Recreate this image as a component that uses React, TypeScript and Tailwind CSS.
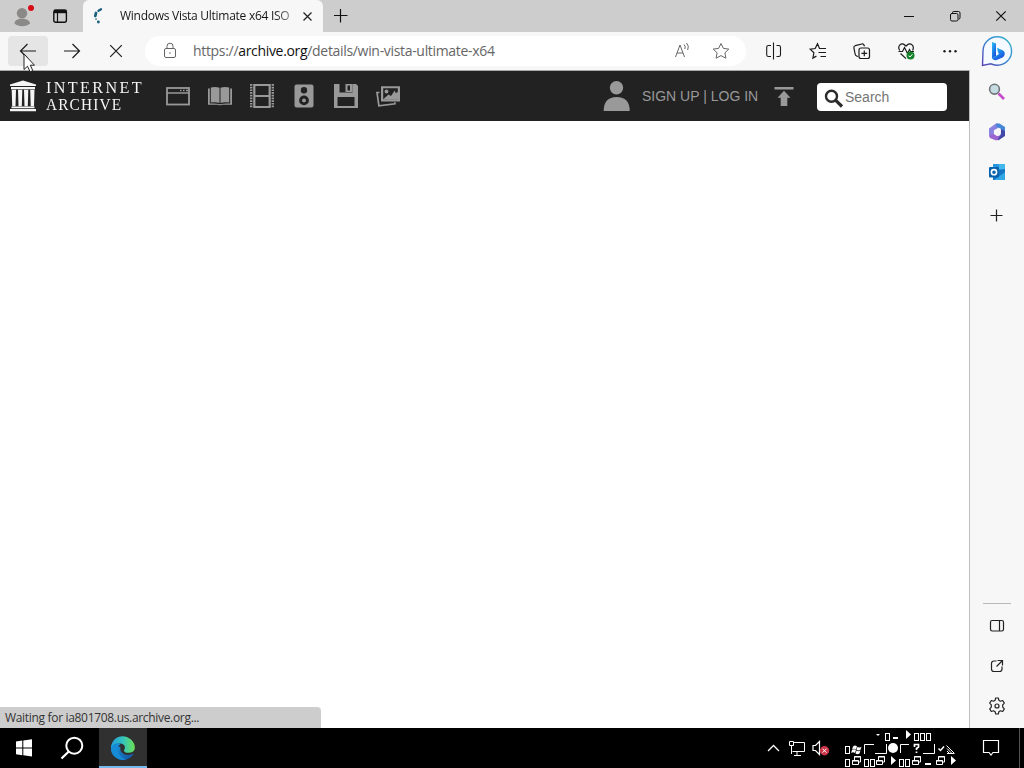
import type { ReactNode } from 'react';

const UI_FONT = "font-['Open_Sans','Noto_Sans',sans-serif]";

function Icon({
  w = 24,
  h = 24,
  className = '',
  children,
}: {
  w?: number;
  h?: number;
  className?: string;
  children: ReactNode;
}) {
  return (
    <svg
      width={w}
      height={h}
      viewBox={`0 0 ${w} ${h}`}
      fill="none"
      stroke="currentColor"
      className={`shrink-0 ${className}`}
    >
      {children}
    </svg>
  );
}

function TabStrip() {
  return (
    <div className="flex h-8 shrink-0 bg-[#cdcdcd]">
      <div className="flex w-[83px] items-center pl-3">
        <Icon w={24} h={32}>
          <circle cx="10" cy="13.3" r="5.2" fill="#8b8987" stroke="none" />
          <path d="M2.500 23.500c0-3 3-4.700 7.500-4.700s8 1.700 8 4.700c-4 3.700-11.500 3.700-15.500 0z" fill="#8b8987" stroke="none" />
          <circle cx="19" cy="8" r="3" fill="#d90d17" stroke="none" />
        </Icon>
        <Icon w={24} h={32} className="ml-3">
          <rect x="5.800" y="10.200" width="12.600" height="12" rx="2" strokeWidth="1.400" />
          <path d="M6 9.600h12.500v3.600H6z" fill="currentColor" stroke="none" />
          <path d="M9.500 13v9" strokeWidth="1.200" />
        </Icon>
      </div>
      <div className="flex w-60 items-center rounded-t-md bg-[#f7f7f7]">
        <Icon w={18} h={18} className="ml-1.5 text-[#1d617f]">
          <path d="M9.500 3.800l2.500-1.500" strokeWidth="2.300" strokeLinecap="round" />
          <path d="M7 6l-.7 3" strokeWidth="2.800" strokeLinecap="round" />
          <path d="M9.300 15h.1" strokeWidth="2.800" strokeLinecap="round" />
          <path d="M6.800 11.500l.5 1.300" strokeWidth="1.500" />
        </Icon>
        <span
          className={`ml-[13px] w-[171px] overflow-hidden whitespace-nowrap bg-gradient-to-r from-[#151515] from-90% to-[#8d8d8d] bg-clip-text text-[12px] leading-4 tracking-[-0.27px] text-transparent ${UI_FONT}`}
        >
          Windows Vista Ultimate x64 ISO
        </span>
        <Icon w={16} h={16} className="ml-2 text-[#222]">
          <path d="M4.500 4.500l8 8m0-8l-8 8" strokeWidth="1.200" />
        </Icon>
      </div>
      <Icon w={34} h={32}>
        <path d="M11 15.500h13.500M17.500 9v13.500" strokeWidth="1.200" />
      </Icon>
      <div className="ml-auto flex">
        <Icon w={46} h={32}>
          <path d="M18 16.500h10" />
        </Icon>
        <Icon w={46} h={32}>
          <rect x="18.500" y="13.500" width="7.500" height="7.500" rx="1.500" />
          <path d="M20.500 13.500v-.700q0-1.300 1.300-1.300h4.700q1.500 0 1.500 1.500v4.700q0 1.500-1.500 1.500" />
        </Icon>
        <Icon w={46} h={32}>
          <path d="M18.300 11.300l9.400 9.400m0-9.400l-9.400 9.400" strokeWidth="1.200" />
        </Icon>
      </div>
    </div>
  );
}

function BingLogo() {
  return (
    <Icon w={32} h={32}>
      <defs>
        <linearGradient id="bingRing" x1="0" y1="1" x2="1" y2="0">
          <stop offset="0" stopColor="#5b3fb3" />
          <stop offset="0.500" stopColor="#3787d2" />
          <stop offset="1" stopColor="#35b6c8" />
        </linearGradient>
        <linearGradient id="bingB" x1="0" y1="0" x2="0.700" y2="1">
          <stop offset="0" stopColor="#2dc4f2" />
          <stop offset="0.600" stopColor="#1c7de8" />
          <stop offset="1" stopColor="#1b4ad8" />
        </linearGradient>
      </defs>
      <path d="M1.500 30.500L2 16a14.300 14.300 0 1 1 14.300 14.300c-2.500 0-4.500-.8-6.500-1.500z" fill="#f4faff" stroke="url(#bingRing)" strokeWidth="1.400" />
      <path d="M11 7l4 1.500v12.500l-4 2.500z" fill="url(#bingB)" stroke="none" />
      <path d="M16 12.800l5.500 2.500q3 1.500 2 4.700-.5 1.500-2 2.500L15.700 25q-2.500 1-4.700-1.500l7-4.500-1-1.800z" fill="url(#bingB)" stroke="none" />
    </Icon>
  );
}

function Toolbar() {
  return (
    <div className="flex h-[38px] shrink-0 items-center bg-[#f7f7f7] text-[#1b1b1b]">
      <div className="relative ml-2 flex h-[30px] w-10 items-center justify-center rounded bg-[#e5e5e5]">
        <Icon>
          <path d="M20 12H4.500m7-7l-7 7 7 7" strokeWidth="1.200" />
        </Icon>
        <svg width="12" height="20" viewBox="0 0 12 20" className="absolute top-[17px] left-[15px]">
          <path d="M1 1v15.500l3.500-3.300 2.600 5.600 2.700-1.200-2.500-5.400h4.200z" fill="#fff" stroke="#222" strokeWidth="1" />
        </svg>
      </div>
      <Icon w={40} className="ml-1">
        <path d="M12 12h15.500m-7-7l7 7-7 7" strokeWidth="1.200" />
      </Icon>
      <Icon w={40} className="ml-1">
        <path d="M14.200 6.200l11.600 11.600m0-11.600L14.200 17.800" strokeWidth="1.200" />
      </Icon>
      <div className="ml-[9px] flex h-[30px] w-[601px] items-center rounded-full bg-white text-[#666]">
        <Icon w={16} h={20} className="ml-[17px]">
          <rect x="2.500" y="7.500" width="11" height="9" rx="1.500" />
          <path d="M5 7.500V5.200a3 3 0 0 1 6 0v2.300" />
          <circle cx="8" cy="12" r=".8" fill="currentColor" stroke="none" />
        </Icon>
        <span className={`ml-[15px] whitespace-nowrap text-[14px] leading-5 tracking-[-0.32px] ${UI_FONT}`}>
          https://<span className="text-[#111]">archive.org</span>/details/win-vista-ultimate-x64
        </span>
        <div className="ml-auto flex pr-[13px]">
          <Icon w={40}>
            <path d="M6.500 18l4.500-12 4.500 12m-7.500-4h6M15 5.500q2 2 .8 4.500M17.500 4q3 3 1.200 7" strokeWidth="1" />
          </Icon>
          <Icon>
            <path d="M12 4.500l2.400 4.900 5.400.7-3.900 3.700 1 5.400-4.900-2.600-4.900 2.600 1-5.400-3.900-3.700 5.400-.7z" strokeLinejoin="round" />
          </Icon>
        </div>
      </div>
      <div className="ml-1.5 flex">
        <Icon w={44}>
          <path d="M19 6.500h-2.500q-1.800 0-1.800 1.800v7.400q0 1.800 1.800 1.800H19M21.500 3.500v17M24.500 6.500h2.200q1.800 0 1.800 1.800v7.400q0 1.800-1.800 1.800h-2.200" strokeWidth="1.100" />
        </Icon>
        <Icon w={44}>
          <path d="M24 9.500h-.5l-2-4.800-2.300 4.800-5 .700 3.700 3.600-1 5.200 3.500-1.900M23.500 9.500h6.500M22.500 13.500h7.500M24.500 17.500h5.500" strokeWidth="1.200" />
        </Icon>
        <Icon w={44}>
          <path d="M18 17.500l-1-.3q-1.600-.5-1.900-2.200l-1.200-6.200q-.3-1.600 1.300-2.100l6.700-1.700q1.500-.4 2.200 1.200l.4 1" strokeWidth="1.200" />
          <rect x="19" y="9" width="10.500" height="10.500" rx="2" strokeWidth="1.200" />
          <path d="M24.300 11.500v5.700m-2.900-2.800h5.800" strokeWidth="1.200" />
        </Icon>
        <Icon w={44}>
          <path d="M15.700 11.500q-2-3.300.2-5.600 2.800-2.600 6.100 1.200 3.300-3.800 6.100-1.200 2.200 2.200.5 5.600M16.500 14.500l5.500 5.100M14.500 12.500h4l2-4 3 6 2-4 1 2h3.500" strokeWidth="1.200" />
          <circle cx="26.500" cy="16.500" r="4" fill="#16822b" stroke="none" />
          <path d="M24.600 16.700l1.300 1.300 2.500-2.700" stroke="#fff" />
        </Icon>
        <Icon w={44}>
          <g fill="currentColor" stroke="none">
            <circle cx="16.500" cy="12.200" r="1.200" />
            <circle cx="22" cy="12.200" r="1.200" />
            <circle cx="27.500" cy="12.200" r="1.200" />
          </g>
        </Icon>
      </div>
      <div className="ml-auto w-[43px]">
        <BingLogo />
      </div>
    </div>
  );
}

function ArchiveHeader() {
  return (
    <header className="flex h-[50px] shrink-0 items-center bg-[#222] text-[#999]">
      <Icon w={28} h={32} className="ml-[9px] text-[#f5f5f5]">
        <g fill="currentColor" stroke="none">
          <path d="M14 .500L27 4.500V6H1V4.500zM2 7h24v2.200H2zM1 29h26v2.200H1zM2.500 26.500h23v1.700h-23z" />
          <path d="M2.700 9.800h4.300l-.5 16.500H3.200zM9 9.800h4.300l-.5 16.500H9.500zM15 9.800h4.300l-.5 16.500h-3.300zM21.200 9.800h4.300l-.5 16.500h-3.300z" />
        </g>
      </Icon>
      <div className="ml-[9px] w-[106px] font-['Liberation_Serif',serif] text-[17px] leading-[17.500px] whitespace-nowrap text-[#f5f5f5]">
        <div className="origin-left scale-x-95 tracking-[2.500px]">INTERNET</div>
        <div className="origin-left scale-x-90 tracking-[1.300px]">ARCHIVE</div>
      </div>
      <nav className="ml-[14px] flex gap-[18px]">
        <Icon>
          <rect x="1" y="4" width="22" height="16.500" strokeWidth="1.800" />
          <path d="M1 9h22" strokeWidth="1.500" />
          <path d="M14 6.500h1.500m1.500 0h1.500m1.500 0H22" strokeWidth="1.500" />
        </Icon>
        <Icon>
          <g fill="currentColor" stroke="none">
            <path d="M2.800 3.500q5-1 8.700.3v15.200q-3.700-1.200-8.700-.5zM12.500 3.800q3.700-1.300 8.700-.3v15q-5-.7-8.700.5z" />
            <path d="M0 4.500h1.800v15.100q6-.5 10.200.6 4.200-1.100 10.200-.6V4.500H24v16.300H14q-2 1-4 0H0z" />
          </g>
        </Icon>
        <Icon w={24} h={26} className="-my-px">
          <path d="M1.200 1v24M22.800 1v24" strokeWidth="2.400" strokeDasharray="1.700 1" />
          <path d="M4.300 1v24M19.700 1v24" strokeWidth="2.200" />
          <path d="M4 2h16M4 13h16M4 24h16" strokeWidth="2.200" />
        </Icon>
        <Icon>
          <path fillRule="evenodd" d="M4.500.500h15q2 0 2 2v19q0 2-2 2h-15q-2 0-2-2v-19q0-2 2-2zM12 3a3.200 3.200 0 1 0 0 6.400A3.200 3.200 0 0 0 12 3zM12 11.500a4.900 4.900 0 1 0 0 9.800 4.900 4.900 0 0 0 0-9.800z" fill="currentColor" stroke="none" />
          <circle cx="12" cy="16.400" r="1.900" fill="currentColor" stroke="none" />
        </Icon>
        <Icon>
          <path fillRule="evenodd" d="M0 0h22l2 2v22H0zM5.500 0v8.500h13V0zM3.500 13v9h17v-9z" fill="currentColor" stroke="none" />
          <path d="M11.500 0h7v8h-7zM13.500 1.500v5h2.500v-5z" fillRule="evenodd" fill="currentColor" stroke="none" />
        </Icon>
        <Icon>
          <path d="M3.500 8.500H1l1.900 13.300 16-2v-1.500" strokeWidth="1.700" />
          <path fillRule="evenodd" d="M5 2.200h19v15.300H5zM7.200 4.300v11h14.600v-11z" fill="currentColor" stroke="none" />
          <circle cx="10.500" cy="7.500" r="1.900" fill="currentColor" stroke="none" />
          <path d="M7 15.500l5.500-5 2.500 1.500L18.700 6.500l1.200 3L21 8l1.500 1v6.500z" fill="currentColor" stroke="none" />
        </Icon>
      </nav>
      <Icon w={28} h={32} className="ml-auto">
        <circle cx="14.500" cy="7.700" r="6.700" fill="currentColor" stroke="none" />
        <path d="M1.700 31q0-14 13-14t13 14z" fill="currentColor" stroke="none" />
      </Icon>
      <span className="ml-[12px] w-[118px] font-['Liberation_Sans',sans-serif] text-[14px] leading-5 whitespace-nowrap">
        SIGN UP | LOG IN
      </span>
      <Icon w={24} className="ml-[12px]">
        <path d="M2.500 3h19v2.500h-19zM12 6.800l6.500 7H15.300V22H8.700v-8.200H5.500z" fill="currentColor" stroke="none" />
      </Icon>
      <div className="mt-0.5 mr-[22px] ml-[21px] flex h-7 w-[130px] items-center rounded bg-white">
        <Icon w={20} h={22} className="ml-[7px] text-[#2b2b2b]">
          <circle cx="7.500" cy="10.200" r="5.500" strokeWidth="2.400" />
          <path d="M11.500 14.200l6.500 6.300" strokeWidth="3.200" />
        </Icon>
        <span className="ml-px font-['Liberation_Sans',sans-serif] text-[14px] text-[#757575]">Search</span>
      </div>
    </header>
  );
}

function Sidebar() {
  return (
    <aside className="flex w-[55px] shrink-0 flex-col items-center border-l border-[#bdbdbd] bg-[#f7f7f7] pt-[10px] text-[#222]">
      <Icon>
        <path d="M13.500 13.500l5.500 5.500" stroke="#c44bc9" strokeWidth="2.700" />
        <circle cx="9.500" cy="9.200" r="4.900" fill="#c5dce3" stroke="#707478" strokeWidth="1.600" />
      </Icon>
      <Icon className="mt-4">
        <path d="M11 3.500l3 .5-1.500 4.500L9 11v5l-4 1.500-1-3V8.500z" fill="#8a83e0" stroke="none" />
        <path d="M11 3.500h3.500L20 7v5.500l-3.500-1.500-1-2.500-4-1.500z" fill="#4486d8" stroke="none" />
        <path d="M16 9l4 2v5l-6.500 4.300-3.500-1 5.500-4.300z" fill="#4348a8" stroke="none" />
        <path d="M4 15.500l5-1.500 3 2 3-.5-2.500 4.800h-2L5 18z" fill="#9c65d0" stroke="none" />
        <path d="M12.200 8.500l3.500 1.800v3.500l-3.500 2.200-3.300-2.200v-3.500z" fill="#f7f7f7" stroke="none" />
      </Icon>
      <Icon className="mt-4">
        <path d="M8 4h12v7H8z" fill="#2695dd" stroke="none" />
        <path d="M14 4h6v5h-6z" fill="#43b8ec" stroke="none" />
        <path d="M8 11l12-1.500V20H8z" fill="#1475c3" stroke="none" />
        <path d="M9 20l11-8v8z" fill="#32a7e6" stroke="none" />
        <rect x="4" y="7" width="10" height="10.500" rx="1" fill="#0863ad" stroke="none" />
        <circle cx="9" cy="12.200" r="2.600" stroke="#fff" strokeWidth="1.600" />
      </Icon>
      <Icon className="mt-5">
        <path d="M5.500 11.500h12M11.500 5.500v12" strokeWidth="1.200" />
      </Icon>
      <div className="mt-auto mb-2.5 h-px w-7 bg-[#b8b8b8]" />
      <Icon>
        <rect x="5.500" y="6.500" width="13" height="10.500" rx="1.700" strokeWidth="1.200" />
        <path d="M14.500 6.500V17" strokeWidth="1.200" />
      </Icon>
      <Icon className="mt-4">
        <path d="M11.500 7H9Q6.500 7 6.500 9.500V15q0 2.500 2.500 2.500h5.500q2.500 0 2.500-2.500v-2.500M12.500 6.500h5v5m0-5l-6 6" strokeWidth="1.200" />
      </Icon>
      <Icon className="mt-4 mb-[10px]">
        <path d="M10.700 4h2.600l.6 2.300 1.500.9 2.300-.7 1.600 2.600-1.600 1.800v2.200l1.600 1.800-1.600 2.600-2.300-.7-1.500.9-.6 2.300h-2.600l-.6-2.300-1.500-.9-2.300.7-1.600-2.600 1.600-1.800v-2.200L4.700 9.100l1.600-2.600 2.300.7 1.500-.9z" strokeWidth="1.200" strokeLinejoin="round" />
        <circle cx="12" cy="12" r="2" strokeWidth="1.200" />
      </Icon>
    </aside>
  );
}

const hollowBoxes = [
  [45, 5], [74, 5], [80, 5], [86, 5],
  [5, 18],
  [5, 31], [24, 31], [30, 31], [59, 31], [65, 31],
];

const restoreGlyphs = [12, 36, 72, 96];

const arrows = [
  [66, 2], [51, 28], [111, 28],
];

// Symbol-font glyphs shown by the language bar
function TrayGlyphs() {
  return (
    <Icon w={120} h={40}>
      {hollowBoxes.map(([x, y]) => (
        <rect key={`${x}-${y}`} x={x + 0.5} y={y + 0.5} width="4" height="7" />
      ))}
      {restoreGlyphs.map((x) => (
        <path key={x} d={`M${x + 0.5} 32.500h6v4h-6zM${x + 2.5} 32v-3.500h6v5.500h-2M${x + 2} 29h7M${x} 33h7`} />
      ))}
      {arrows.map(([x, y]) => (
        <path key={`${x}-${y}`} d={`M${x} ${y}l5 4.500-5 4.500z`} fill="currentColor" stroke="none" />
      ))}
      <path d="M36 6h4l-2 2zM53 9h5v2h-5zM85 35h6v2h-6z" fill="currentColor" stroke="none" />
      <path d="M24.500 26v-9.500H34M35 25.500h11.500V16M60.500 25v-8.500H69M83 25.500h11.500V16" />
      <circle cx="53" cy="20" r="5" fill="currentColor" stroke="none" />
      <path d="M74.500 19v-2.500h4V19l-2 1.500V22m0 1.500V25" strokeWidth="1.700" />
      <path d="M98.500 20.500l2 2 3.500-4" strokeWidth="1.500" />
      <path d="M106.500 17.500l8 8M107 20.500l5 5M107 23l3 3M107 25.500h7" />
      <path d="M13 18.500q2-2 4 0l-1 3q-2-1.500-4 0zM17.500 18.800q2 1.500 4 0l-1 3q-2 1.500-4 0zM12 22q2-1.500 4 0l-1 3q-2-1.500-4 0zM16.500 22.500q2 1.500 4 0l-1 3q-2 1.500-4 0z" fill="currentColor" stroke="none" />
    </Icon>
  );
}

function Taskbar() {
  return (
    <footer className="flex h-10 shrink-0 bg-black text-white">
      <Icon w={48} h={40}>
        <path d="M16 13.600l6.300-1v6.900H16zM23.300 12.400l8.700-1.200v8.300h-8.700zM16 20.500h6.300v6.700l-6.300-1zM23.300 20.500H32v8l-8.700-1.200z" fill="currentColor" stroke="none" />
      </Icon>
      <Icon w={51} h={40}>
        <circle cx="26.300" cy="17.700" r="8" strokeWidth="2" />
        <path d="M20.800 23.500l-7.300 7" strokeWidth="2.300" />
      </Icon>
      <div className="flex w-12 justify-center border-b-2 border-[#76b9ed] bg-[#303030]">
        <Icon w={48} h={38}>
          <defs>
            <linearGradient id="edgeTop" x1="0" y1="0.500" x2="1" y2="0.500">
              <stop offset="0" stopColor="#239cdb" />
              <stop offset="0.500" stopColor="#35c4bd" />
              <stop offset="1" stopColor="#6be053" />
            </linearGradient>
            <linearGradient id="edgeBody" x1="0" y1="0" x2="1" y2="1">
              <stop offset="0" stopColor="#1b9ade" />
              <stop offset="1" stopColor="#1250a0" />
            </linearGradient>
          </defs>
          <path d="M12 20a12 12 0 0 0 20 9q3-2.500 2-3.500-5 3-10 0-3.500-2.500-2.500-6.500L12 17z" fill="url(#edgeBody)" stroke="none" />
          <path d="M12 20C12.500 8 25 5 32 11.500q4.500 4.500 3.800 9.300-1 4-6.300 4-4.500 0-4.500-2.300 0-1 .8-2 .8-4-3.800-5-7-.5-10 4.500z" fill="url(#edgeTop)" stroke="none" />
          <path d="M12 20q4-6 10-4.500-5 4-2.500 9.500 2 5 8 6.300-6 2-11-2-4.500-4-4.500-9.300z" fill="#168bd6" stroke="none" />
        </Icon>
      </div>
      <div className="ml-auto flex">
        <Icon w={24} h={40}>
          <path d="M7 23l5.500-5.500L18 23" strokeWidth="1.300" />
        </Icon>
        <Icon w={24} h={40}>
          <path d="M8.500 14.500h11v9h-12M12 24v3M9 27.500h7M4.500 13.500h4v4h-4zM6.500 18v8" />
        </Icon>
        <Icon w={28} h={40} className="mr-[3px]">
          <path d="M4 17.500h2.500l4-4v13l-4-4H4z" strokeWidth="1.200" />
          <circle cx="15.500" cy="22.700" r="4.700" fill="#cb3648" stroke="none" />
          <path d="M13.500 20.700l4 4m0-4l-4 4" stroke="#fff" />
        </Icon>
        <TrayGlyphs />
        <Icon w={64} h={40}>
          <path d="M23.500 12.500h15v12h-5.500l-2 2.500-2-2.500h-5.500z" strokeWidth="1.200" />
          <path d="M59.500 0v40" stroke="#555" />
        </Icon>
      </div>
    </footer>
  );
}

export default function App() {
  return (
    <div className="flex h-[768px] w-[1024px] flex-col overflow-hidden bg-white text-[#111]">
      <TabStrip />
      <Toolbar />
      <div className="flex min-h-0 flex-1">
        <div className="flex flex-1 flex-col border-t border-[#a9a9a9]">
          <ArchiveHeader />
          <main className="flex flex-1 items-end bg-white">
            <div className={`h-[21px] w-[321px] rounded-tr bg-[#cdcdcd] pl-[5px] text-[12px] leading-[22px] tracking-[-0.32px] text-[#333] ${UI_FONT}`}>
              Waiting for ia801708.us.archive.org...
            </div>
          </main>
        </div>
        <Sidebar />
      </div>
      <Taskbar />
    </div>
  );
}
